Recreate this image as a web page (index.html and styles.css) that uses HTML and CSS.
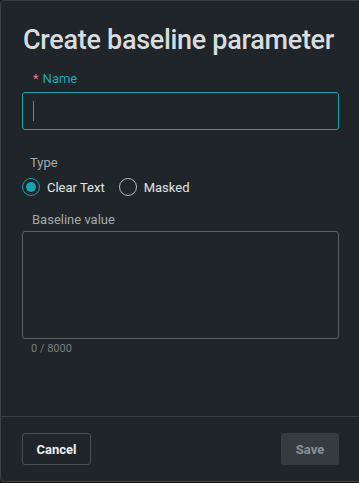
FILE: index.html
```html
<!DOCTYPE html>
<html lang="en">
<head>
    <meta charset="UTF-8">
    <meta name="viewport" content="width=device-width, initial-scale=1.0">
    <title>Create baseline parameter</title>
    <link rel="stylesheet" href="styles.css">
</head>
<body>

    <div class="dialog">
        <div class="dialog-body">
            <h2 class="title">Create baseline parameter</h2>

            <label class="field-label required" for="paramName"><span class="star">*</span>Name</label>
            <div class="input focused"><span class="caret"></span></div>

            <div class="type-label">Type</div>
            <div class="radios">
                <span class="radio checked"><span class="dot"></span></span>
                <span class="radio-text">Clear Text</span>
                <span class="radio"></span>
                <span class="radio-text">Masked</span>
            </div>

            <div class="value-label">Baseline value</div>
            <div class="textarea"></div>
            <div class="counter">0 / 8000</div>
        </div>

        <div class="dialog-footer">
            <button class="btn btn-cancel">Cancel</button>
            <button class="btn btn-save">Save</button>
        </div>
    </div>

</body>
</html>
```

FILE: styles.css
```css
html, body {
    margin: 0;
    padding: 0;
    height: 100%;
    background-color: #14181a;
    overflow: hidden;
}
body {
    font-family: Roboto, "Noto Sans", sans-serif;
    color: #d6dadc;
}
.dialog {
    width: 361px;
    height: 480px;
    background-color: #1f2528;
    border: 1px solid #3b4245;
    border-radius: 4px;
    box-sizing: content-box;
    display: flex;
    flex-direction: column;
}
.dialog-body {
    flex: 1;
    padding: 0 23px 0 21px;
}
.title {
    margin: 24px 0 0 1px;
    font-size: 27px;
    font-weight: 500;
    letter-spacing: -0.3px;
    color: #d8dcdf;
    line-height: 30px;
}
.field-label {
    display: block;
    margin: 16px 0 0 11px;
    font-size: 13px;
    line-height: 16px;
    color: #22a7b4;
}
.star {
    color: #e07a78;
    margin-right: 4px;
}
.input {
    margin-top: 5px;
    height: 36px;
    border: 1px solid #1aa3b0;
    border-radius: 3px;
    display: flex;
    align-items: center;
    padding-left: 10px;
}
.caret {
    width: 1px;
    height: 20px;
    background-color: #1aa3b0;
}
.type-label {
    margin: 25px 0 0 8px;
    font-size: 13px;
    line-height: 16px;
    color: #a3aaae;
}
.radios {
    display: flex;
    align-items: center;
    margin-top: 7px;
}
.radio {
    width: 16px;
    height: 16px;
    border: 1.5px solid #b4babd;
    border-radius: 50%;
    display: flex;
    align-items: center;
    justify-content: center;
}
.radio.checked {
    border-color: #1aa3b0;
}
.dot {
    width: 10px;
    height: 10px;
    border-radius: 50%;
    background-color: #1aa3b0;
}
.radio-text {
    margin: 0 14px 0 7px;
    font-size: 13px;
    color: #e2e5e7;
}
.value-label {
    margin: 16px 0 0 10px;
    font-size: 13px;
    line-height: 16px;
    color: #a3aaae;
}
.textarea {
    margin-top: 3px;
    height: 106px;
    border: 1px solid #5a6064;
    border-radius: 3px;
}
.counter {
    margin: 3px 0 0 9px;
    font-size: 11px;
    color: #787f83;
}
.dialog-footer {
    border-top: 1px solid #3b4245;
    height: 64px;
    padding: 0 23px 0 21px;
    display: flex;
    align-items: center;
    justify-content: space-between;
}
.btn {
    font-family: Roboto, "Noto Sans", sans-serif;
    font-size: 13px;
    font-weight: bold;
    height: 32px;
    border-radius: 3px;
    cursor: pointer;
}
.btn-cancel {
    width: 69px;
    background-color: transparent;
    color: #eef0f1;
    border: 1px solid #474e52;
}
.btn-save {
    width: 58px;
    background-color: #353c3f;
    color: #8b9296;
    border: none;
}
```
